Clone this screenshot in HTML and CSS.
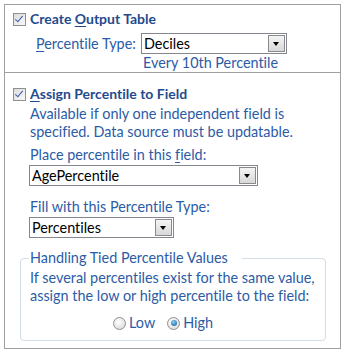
FILE: index.html
```html
<!DOCTYPE html>
<html>

<head>
    <meta charset="UTF-8">
    <title>Percentile Options</title>
    <link rel="stylesheet" href="styles.css">
</head>

<body>
    <div class="panel panel-top">
        <div class="check-row">
            <span class="checkbox checked"></span>
            <span class="heading">Create <u>O</u>utput Table</span>
        </div>
        <div class="field-row">
            <span class="field-label"><u>P</u>ercentile Type:</span>
            <div class="select select-type">
                <span class="select-value">Deciles</span>
                <span class="select-button"></span>
            </div>
        </div>
        <div class="hint">Every 10th Percentile</div>
    </div>

    <div class="panel panel-bottom">
        <div class="check-row">
            <span class="checkbox checked"></span>
            <span class="heading"><u>A</u>ssign Percentile to Field</span>
        </div>
        <div class="body-text">
            Available if only one independent field is<br>
            specified. Data source must be updatable.
        </div>
        <div class="body-text label-place">Place percentile in this <u>f</u>ield:</div>
        <div class="select select-field">
            <span class="select-value">AgePercentile</span>
            <span class="select-button"></span>
        </div>
        <div class="body-text label-fill">Fill with this Percentile Type:</div>
        <div class="select select-fill">
            <span class="select-value">Percentiles</span>
            <span class="select-button"></span>
        </div>

        <fieldset class="group">
            <legend>Handling Tied Percentile Values</legend>
            <div class="body-text">
                If several percentiles exist for the same value,<br>
                assign the low or high percentile to the field:
            </div>
            <div class="radio-row">
                <span class="radio"></span><span class="radio-label">Low</span>
                <span class="radio selected"></span><span class="radio-label">High</span>
            </div>
        </fieldset>
    </div>
</body>

</html>
```

FILE: styles.css
```css
body {
    margin: 0;
    background-color: #fff;
    font-family: Lato, "Open Sans", sans-serif;
    font-size: 14.4px;
    line-height: 18px;
    font-variant-ligatures: none;
    color: #2c5ca6;
}

u {
    text-decoration: underline;
    text-underline-offset: 2px;
}

.panel {
    box-sizing: border-box;
    width: 337px;
    margin-left: 4px;
    border: 1px solid #a0a0a0;
}

.panel-top {
    margin-top: 4px;
    height: 69px;
    padding-top: 5px;
}

.panel-bottom {
    height: 276px;
    border-top: none;
    padding-top: 12px;
}

.check-row {
    display: flex;
    align-items: center;
    gap: 4px;
    padding-left: 8px;
    height: 18px;
}

.checkbox {
    box-sizing: border-box;
    width: 13px;
    height: 13px;
    border: 1px solid #8f8f8f;
    background: linear-gradient(135deg, #dcdcdc, #f8f8f8);
    position: relative;
}

.checkbox.checked::after {
    content: "";
    position: absolute;
    left: 3px;
    top: 0px;
    width: 3px;
    height: 7px;
    border: solid #3a5bb0;
    border-width: 0 1.5px 1.5px 0;
    transform: rotate(40deg);
}

.heading {
    font-size: 14px;
    font-weight: bold;
    color: #1f4b8e;
}

.field-row {
    display: flex;
    align-items: center;
    margin-top: 5px;
}

.field-label {
    width: 105px;
    padding-left: 31px;
    box-sizing: content-box;
}

.select {
    box-sizing: border-box;
    display: flex;
    align-items: center;
    height: 21px;
    border: 1px solid #828790;
    background: #fff;
    color: #000;
    padding: 0 1px 0 2px;
}

.select-value {
    flex: 1;
    line-height: 18px;
}

.select-button {
    box-sizing: border-box;
    width: 17px;
    height: 17px;
    border: 1px solid #8a8a8a;
    background: linear-gradient(#f4f4f4, #d8d8d8);
    position: relative;
}

.select-button::after {
    content: "";
    position: absolute;
    left: 4px;
    top: 6px;
    border-left: 3.5px solid transparent;
    border-right: 3.5px solid transparent;
    border-top: 4px solid #000;
}

.select-type {
    width: 146px;
}

.hint {
    padding-left: 138px;
}

.body-text {
    padding-left: 25px;
    margin-top: 2px;
}

.label-place {
    margin-top: 5px;
}

.select-field {
    width: 229px;
    margin: 1px 0 0 24px;
}

.label-fill {
    margin-top: 12px;
}

.select-fill {
    width: 145px;
    margin: 1px 0 0 24px;
}

.group {
    box-sizing: border-box;
    width: 306px;
    margin: 11px 0 0 15px;
    padding: 0 9px 8px 9px;
    border: 1px solid #d3dde6;
    border-radius: 4px;
}

.group legend {
    padding: 0 14px 0 1px;
    margin-left: -1px;
}

.group .body-text {
    padding-left: 0;
}

.radio-row {
    display: flex;
    align-items: center;
    height: 18px;
    margin-top: 9px;
    padding-left: 83px;
}

.radio {
    box-sizing: border-box;
    width: 13px;
    height: 13px;
    border-radius: 50%;
    border: 1px solid #8f8f8f;
    background: radial-gradient(circle at 40% 35%, #fff, #d4d4d4);
    position: relative;
}

.radio.selected::after {
    content: "";
    position: absolute;
    left: 2.5px;
    top: 2.5px;
    width: 6px;
    height: 6px;
    border-radius: 50%;
    background: radial-gradient(circle at 40% 35%, #7fd3f5, #10509a);
}

.radio-label {
    margin: 0 12px 0 3px;
}
```
